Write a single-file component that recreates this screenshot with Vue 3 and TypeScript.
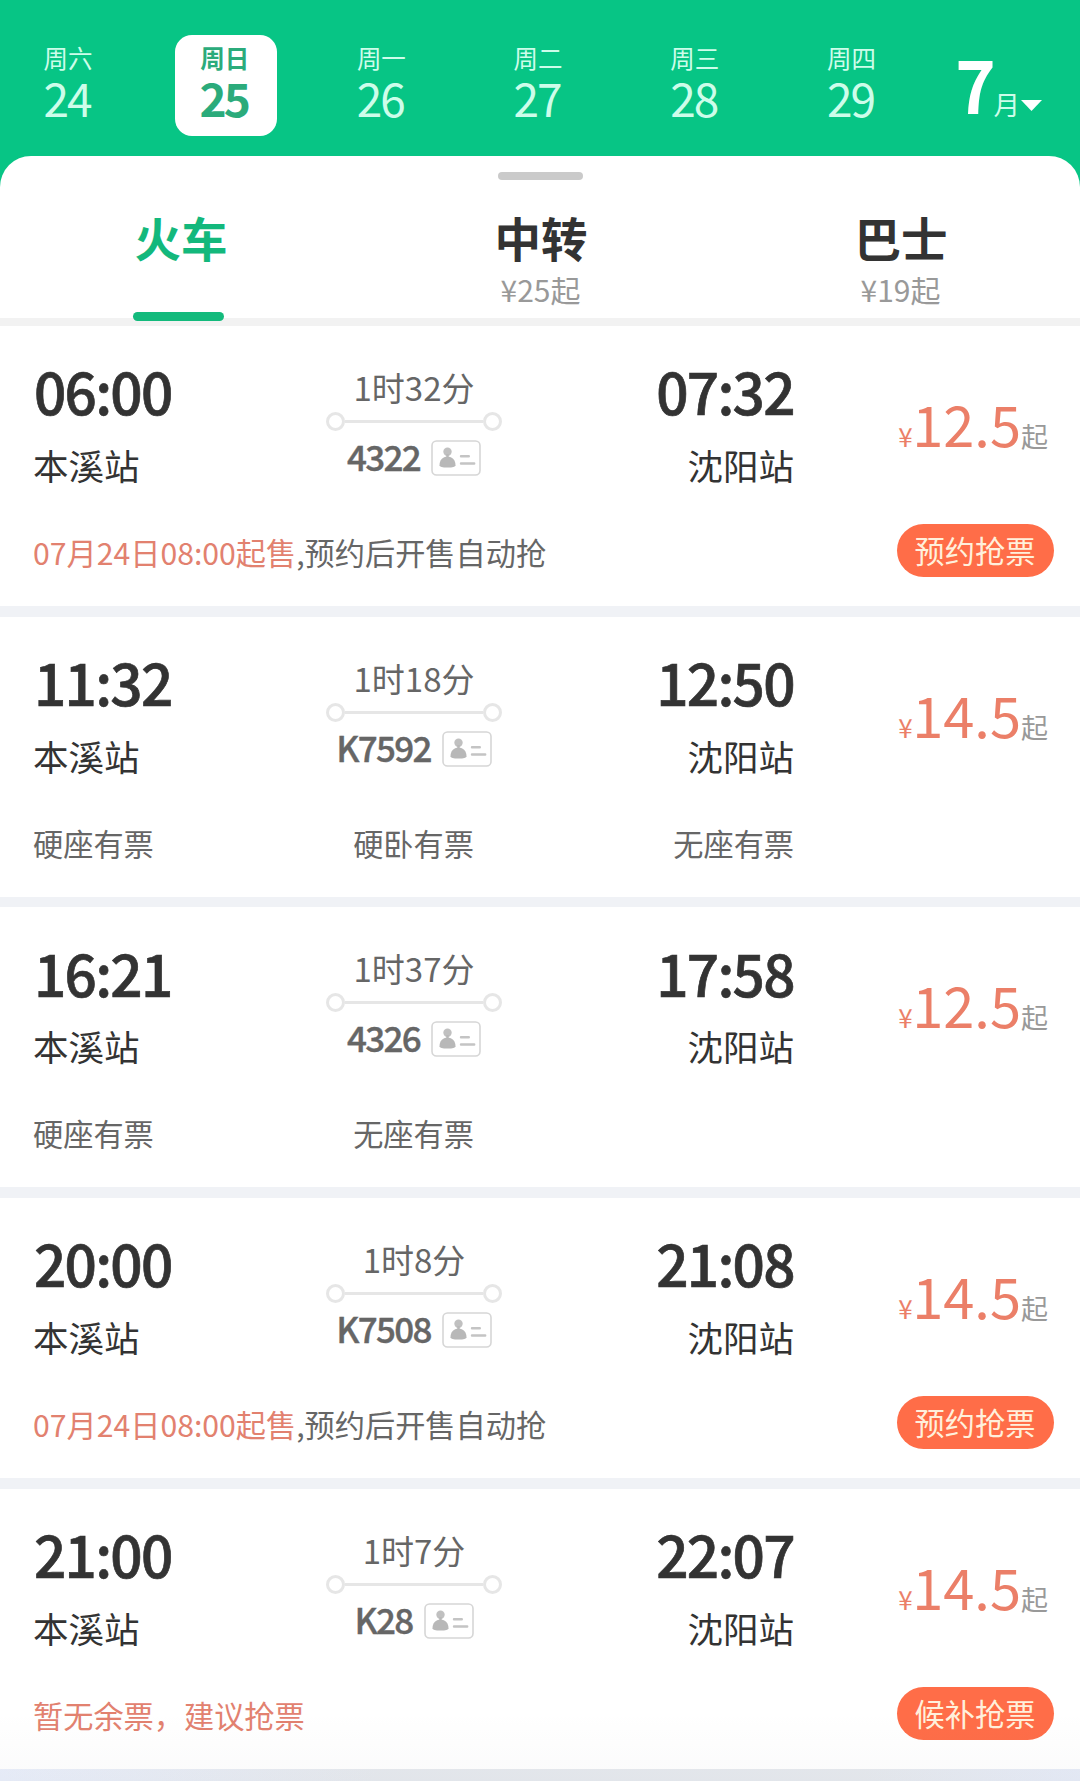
<script setup lang="ts">
interface Day {
  week: string
  date: number
  active?: boolean
}

interface Tab {
  name: string
  price?: string
  active?: boolean
}

interface Train {
  depart: string
  arrive: string
  duration: string
  no: string
  price: string
  seats?: string[]
  warn?: string
  note?: string
  action?: string
}

const days: Day[] = [
  { week: '周六', date: 24 },
  { week: '周日', date: 25, active: true },
  { week: '周一', date: 26 },
  { week: '周二', date: 27 },
  { week: '周三', date: 28 },
  { week: '周四', date: 29 },
]

const tabs: Tab[] = [
  { name: '火车', active: true },
  { name: '中转', price: '¥25起' },
  { name: '巴士', price: '¥19起' },
]

const trains: Train[] = [
  { depart: '06:00', arrive: '07:32', duration: '1时32分', no: '4322', price: '12.5', warn: '07月24日08:00起售', note: ',预约后开售自动抢', action: '预约抢票' },
  { depart: '11:32', arrive: '12:50', duration: '1时18分', no: 'K7592', price: '14.5', seats: ['硬座有票', '硬卧有票', '无座有票'] },
  { depart: '16:21', arrive: '17:58', duration: '1时37分', no: '4326', price: '12.5', seats: ['硬座有票', '无座有票', ''] },
  { depart: '20:00', arrive: '21:08', duration: '1时8分', no: 'K7508', price: '14.5', warn: '07月24日08:00起售', note: ',预约后开售自动抢', action: '预约抢票' },
  { depart: '21:00', arrive: '22:07', duration: '1时7分', no: 'K28', price: '14.5', warn: '暂无余票，建议抢票', action: '候补抢票' },
]
</script>

<template>
  <div class="page">
    <header class="calendar">
      <div class="days">
        <div v-for="d in days" :key="d.date" class="day" :class="{ active: d.active }">
          <span class="week">{{ d.week }}</span>
          <span class="date">{{ d.date }}</span>
        </div>
      </div>
      <div class="month">
        <span class="month-num">7</span>
        <span class="month-unit">月</span>
        <svg class="caret" width="21" height="11" viewBox="0 0 21 11"><path d="M0 0H21L10.500 11Z" fill="#fff" /></svg>
      </div>
    </header>

    <section class="sheet">
      <div class="handle"></div>
      <nav class="tabs">
        <div v-for="t in tabs" :key="t.name" class="tab" :class="{ active: t.active }">
          <span class="tab-name">{{ t.name }}</span>
          <span v-if="t.price" class="tab-price">{{ t.price }}</span>
          <i v-if="t.active" class="underline"></i>
        </div>
      </nav>
      <div class="divider"></div>

      <main class="list">
        <article v-for="t in trains" :key="t.no" class="card">
          <div class="main">
            <div class="stop">
              <span class="time">{{ t.depart }}</span>
              <span class="station">本溪站</span>
            </div>
            <div class="mid">
              <span class="duration">{{ t.duration }}</span>
              <div class="route"><i class="dot"></i><i class="line"></i><i class="dot"></i></div>
              <div class="train">
                <span class="no">{{ t.no }}</span>
                <svg class="idcard" width="50" height="36" viewBox="0 0 50 36">
                  <rect x="1" y="1" width="48" height="34" rx="4.500" fill="#fff" stroke="#d6d6d6" stroke-width="1.600" />
                  <circle cx="16.500" cy="11.800" r="4.200" fill="#c0c0c0" />
                  <path d="M8.500 25.200c0-5 3.200-8.700 8-8.700s8 3.700 8 8.700q0 2.300-8 2.300t-8-2.300z" fill="#b8b8b8" />
                  <path d="M15.300 14h2.400v4h-2.400z" fill="#b8b8b8" />
                  <path d="M30 16.300H37.800M30 23.500H43.200" stroke="#c4c4c4" stroke-width="2.400" stroke-linecap="round" />
                </svg>
              </div>
            </div>
            <div class="stop end">
              <span class="time">{{ t.arrive }}</span>
              <span class="station">沈阳站</span>
            </div>
            <div class="price"><span class="yen">¥</span><span class="amount">{{ t.price }}</span><span class="from">起</span></div>
          </div>
          <div class="foot">
            <div v-if="t.seats" class="seats">
              <span v-for="(s, i) in t.seats" :key="i" class="seat">{{ s }}</span>
            </div>
            <div v-else class="notice"><span class="warn">{{ t.warn }}</span>{{ t.note }}</div>
            <button v-if="t.action" class="action">{{ t.action }}</button>
          </div>
        </article>
      </main>
      <div class="bottom-shade"></div>
    </section>
  </div>
</template>

<style>
body {
  margin: 0;
}
</style>

<style scoped>
.page {
  position: relative;
  width: 1080px;
  height: 1781px;
  overflow: hidden;
  background: #07c585;
  font-family: 'Noto Sans CJK SC', sans-serif;
  color: #333;
}
i {
  display: block;
}
.calendar {
  display: flex;
  justify-content: space-between;
  height: 156px;
  color: #cdfdea;
}
.days {
  display: flex;
  padding: 35px 0 0 17px;
  gap: 54.700px;
}
.day {
  display: flex;
  flex-direction: column;
  align-items: center;
  width: 102px;
  height: 101px;
  border-radius: 17px;
}
.day.active {
  box-sizing: border-box;
  padding-right: 2px;
  margin: 0 -1px 0 1px;
  background: #fff;
  color: #2bab7b;
  font-weight: 700;
}
.week {
  margin-top: 8px;
  font-size: 24.500px;
  line-height: 30px;
}
.date {
  margin-top: 1px;
  font-size: 46px;
  line-height: 46px;
  letter-spacing: -2px;
  padding-right: 2px;
}
.active .date {
  letter-spacing: -3px;
}
.month {
  display: flex;
  align-items: flex-end;
  height: 122px;
  padding-right: 38px;
}
.month-num {
  font-size: 73px;
  line-height: 80px;
  font-weight: 700;
  color: #fff;
  letter-spacing: -4px;
  transform: scaleX(0.94);
}
.month-unit {
  font-size: 26.500px;
  line-height: 34px;
  margin-bottom: 1px;
}
.caret {
  margin: 0 0 11px 1px;
}
.sheet {
  position: relative;
  height: 1625px;
  border-radius: 31px 31px 0 0;
  background: linear-gradient(#fff, #fff) 0 0 / 100% 1600px no-repeat, linear-gradient(90deg, #e9eefa, #e6e9ee 35%, #e6e9ee 80%, #e6ebf7);
  overflow: hidden;
}
.handle {
  width: 85px;
  height: 8px;
  margin: 16px auto 0;
  border-radius: 4px;
  background: #cacaca;
}
.tabs {
  display: flex;
  height: 138px;
}
.tab {
  position: relative;
  display: flex;
  flex: 1;
  flex-direction: column;
  align-items: center;
}
.tab-name {
  margin-top: 27px;
  font-size: 46.500px;
  line-height: 60px;
  font-weight: 700;
  padding-left: 2px;
}
.tab-price {
  margin-top: 4px;
  font-size: 30px;
  line-height: 36px;
  color: #999;
  padding-left: 1px;
}
.tab.active {
  color: #13b87c;
}
.underline {
  position: absolute;
  z-index: 1;
  left: 133px;
  top: 132px;
  width: 91px;
  height: 9px;
  border-radius: 4.500px;
  background: #13ba7c;
}
.divider {
  height: 8px;
  background: #f2f2f2;
}
.list {
  display: flex;
  flex-direction: column;
  gap: 10.700px;
  background: #f0f2f6;
}
.card {
  box-sizing: border-box;
  height: 280px;
  padding: 0 26px 0 33px;
  background: #fff;
}
.main {
  display: flex;
  height: 198px;
}
.stop,
.mid {
  display: flex;
  flex-direction: column;
  width: 254px;
}
.stop {
  align-items: flex-start;
}
.stop.end {
  align-items: flex-end;
}
.time {
  margin: 34.400px 0 0 0.500px;
  font-size: 58.500px;
  line-height: 60px;
  font-weight: 500;
  letter-spacing: -1.800px;
  -webkit-text-stroke: 0.700px currentColor;
  transform: scaleX(0.97);
  transform-origin: 0 50%;
}
.end .time {
  margin-right: 1px;
  transform-origin: 100% 50%;
}
.station {
  margin-top: 20.600px;
  font-size: 35.500px;
  line-height: 48px;
}
.end .station {
  margin-right: 1px;
}
.mid {
  align-items: center;
  color: #666;
}
.duration {
  margin-top: 41px;
  font-size: 33px;
  line-height: 40px;
}
.route {
  display: flex;
  align-items: center;
  width: 176px;
  height: 19px;
  margin-top: 5px;
}
.dot {
  box-sizing: border-box;
  width: 19px;
  height: 19px;
  border: 3px solid #e6e6e6;
  border-radius: 50%;
}
.line {
  flex: 1;
  height: 3px;
  background: #e6e6e6;
}
.train {
  display: flex;
  margin-top: 9px;
}
.no {
  font-size: 35px;
  line-height: 32px;
  font-weight: 500;
  letter-spacing: -1.700px;
  -webkit-text-stroke: 0.400px currentColor;
}
.idcard {
  margin-left: 11px;
}
.price {
  display: flex;
  flex: 1;
  justify-content: flex-end;
  align-items: baseline;
  height: 80px;
  margin-top: 57px;
  padding-right: 6px;
  line-height: 80px;
  color: #eb7f68;
}
.yen {
  font-size: 26px;
  margin-right: -0.500px;
}
.amount {
  font-size: 56px;
}
.from {
  font-size: 27px;
  color: #999;
}
.foot {
  display: flex;
  justify-content: space-between;
  font-size: 30.200px;
  line-height: 57px;
  color: #666;
}
.warn {
  color: #e2816f;
}
.seats {
  display: flex;
  width: 761px;
}
.seat {
  flex: 1;
  text-align: center;
}
.seat:first-child {
  text-align: left;
}
.seat:last-child {
  text-align: right;
}
.action {
  width: 157px;
  height: 53px;
  padding: 0 1px 0 0;
  border: 0;
  border-radius: 27px;
  background: #ff6d48;
  color: #fff0dc;
  font: 30.200px/53px 'Noto Sans CJK SC', sans-serif;
}
/* soft shade that fades in over the end of the list */
.bottom-shade {
  position: absolute;
  left: 0;
  right: 0;
  bottom: 0;
  height: 70px;
  background: linear-gradient(rgba(60, 70, 80, 0), rgba(60, 70, 80, 0.025));
}
</style>
